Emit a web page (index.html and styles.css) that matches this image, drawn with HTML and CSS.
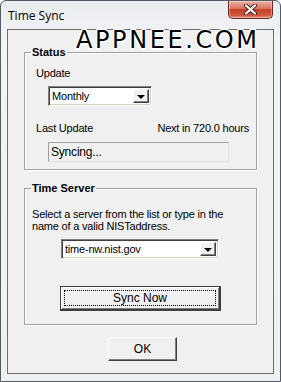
FILE: index.html
```html
<!DOCTYPE html>
<html lang="en">
<head>
    <meta charset="UTF-8">
    <title>Time Sync</title>
    <link rel="stylesheet" href="styles.css">
</head>
<body>
    <div class="window">
        <div class="titlebar">
            <span class="title">Time Sync</span>
            <button class="close" title="Close">
                <svg width="15" height="11" viewBox="0 0 15 11">
                    <path d="M3 1.5 L12 9.5 M12 1.5 L3 9.5" stroke="#4a2a26" stroke-width="4.2" stroke-linecap="round"/>
                    <path d="M3 1.5 L12 9.5 M12 1.5 L3 9.5" stroke="#fff" stroke-width="2.2" stroke-linecap="round"/>
                </svg>
            </button>
        </div>
        <div class="client">
            <fieldset class="group status">
                <legend>Status</legend>
                <div class="label indent">Update</div>
                <div class="combo combo-update">
                    <span class="combo-text">Monthly</span>
                    <span class="combo-btn"><span class="arrow"></span></span>
                </div>
                <div class="row indent">
                    <span>Last Update</span>
                    <span>Next in 720.0 hours</span>
                </div>
                <div class="readonly">Syncing...</div>
            </fieldset>
            <fieldset class="group server">
                <legend>Time Server</legend>
                <p class="hint">Select a server from the list or type in the name of a valid NISTaddress.</p>
                <div class="combo combo-server">
                    <span class="combo-text">time-nw.nist.gov</span>
                    <span class="combo-btn"><span class="arrow"></span></span>
                </div>
                <button class="btn btn-default"><span class="focus">Sync Now</span></button>
            </fieldset>
            <button class="btn btn-ok">OK</button>
        </div>
        <div class="watermark">APPNEE.COM</div>
    </div>
</body>
</html>
```

FILE: styles.css
```css
body {
    margin: 0;
    background-color: #fff;
    font-family: 'Liberation Sans', Arial, sans-serif;
    font-size: 11px;
    letter-spacing: -0.2px;
    color: #000;
}
.window {
    position: relative;
    width: 281px;
    height: 382px;
    box-sizing: border-box;
    border: 1px solid #555b63;
    border-radius: 6px 6px 0 0;
    background: linear-gradient(#e9ecf0, #f3f4f6 40px, #eef0f2);
    padding: 0 6px 7px 6px;
    overflow: hidden;
}
.titlebar {
    height: 28px;
    display: flex;
    align-items: flex-start;
}
.title {
    font-family: 'Open Sans', 'Noto Sans', sans-serif;
    font-size: 12px;
    line-height: 14px;
    letter-spacing: 0;
    margin: 8px 0 0 1px;
    color: #000;
}
.close {
    margin-left: auto;
    margin-right: 1px;
    width: 45px;
    height: 18px;
    padding: 0;
    display: flex;
    align-items: center;
    justify-content: center;
    border: 1px solid #6c2b22;
    border-top: none;
    border-radius: 0 0 5px 5px;
    background: linear-gradient(#eab3a6, #d9735d 45%, #c5402a 50%, #cf5a3f 85%, #e39a7f);
    box-shadow: inset 0 0 0 1px rgba(255, 255, 255, 0.35);
}
.client {
    height: 345px;
    box-sizing: border-box;
    border: 1px solid #6e6e6e;
    background-color: #f0f0f0;
    padding: 0;
    overflow: hidden;
}
.group {
    width: 233px;
    box-sizing: border-box;
    margin: 0 0 0 16px;
    border: 1px solid #a0a0a0;
    box-shadow: inset 1px 1px 0 #fff, 1px 1px 0 #fff;
    padding: 0 7px 7px 7px;
    min-width: 0;
}
.group legend {
    font-weight: bold;
    line-height: 13px;
    letter-spacing: 0;
    padding: 0 1px;
    margin-left: -1px;
}
.status {
    margin-top: 16px;
}
.server {
    margin-top: 12px;
    padding-bottom: 13px;
}
.label {
    line-height: 13px;
    margin-top: 8px;
}
.indent {
    margin-left: 4px;
}
.combo {
    display: flex;
    height: 20px;
    box-sizing: border-box;
    background-color: #fff;
    border: 1px solid;
    border-color: #808080 #fff #fff #808080;
    box-shadow: inset 1px 1px 0 #404040, inset -1px -1px 0 #d4d0c8;
    padding: 2px 2px 2px 2px;
}
.combo-text {
    flex: 1;
    line-height: 14px;
    padding-left: 1px;
}
.combo-btn {
    width: 16px;
    height: 14px;
    box-sizing: border-box;
    background-color: #f0f0f0;
    border: 1px solid;
    border-color: #fff #404040 #404040 #fff;
    box-shadow: inset -1px -1px 0 #808080;
    display: flex;
    align-items: center;
    justify-content: center;
}
.arrow {
    width: 0;
    height: 0;
    border-left: 4px solid transparent;
    border-right: 4px solid transparent;
    border-top: 4px solid #000;
    margin-top: 1px;
}
.combo-update {
    width: 104px;
    margin: 6px 0 0 16px;
}
.row {
    display: flex;
    justify-content: space-between;
    line-height: 13px;
    margin-top: 16px;
}
.readonly {
    width: 181px;
    height: 20px;
    box-sizing: border-box;
    margin: 7px 0 0 16px;
    border: 1px solid;
    border-color: #a0a0a0 #e3e3e3 #e3e3e3 #a0a0a0;
    line-height: 18px;
    padding-left: 2px;
    font-size: 12px;
}
.hint {
    margin: 13px 0 0 0;
    line-height: 12px;
}
.combo-server {
    width: 158px;
    margin: 7px 0 0 29px;
}
.btn {
    display: block;
    font-family: 'Liberation Sans', Arial, sans-serif;
    font-size: 12px;
    color: #000;
    background-color: #f0f0f0;
    box-sizing: border-box;
    padding: 0;
}
.btn-default {
    width: 161px;
    height: 25px;
    margin: 27px 0 0 28px;
    border: 1px solid #3c3c3c;
    border-bottom-width: 2px;
    border-right-width: 2px;
    box-shadow: inset 1px 1px 0 #fff, inset -1px -1px 0 #808080;
    padding: 3px;
}
.focus {
    display: block;
    height: 100%;
    box-sizing: border-box;
    border: 1px dotted #000;
    line-height: 15px;
}
.btn-ok {
    width: 69px;
    height: 24px;
    margin: 12px 0 0 100px;
    border: 1px solid;
    border-color: #fff #404040 #404040 #fff;
    box-shadow: inset -1px -1px 0 #808080;
}
.watermark {
    position: absolute;
    left: 75px;
    top: 26px;
    font-family: 'DejaVu Sans', sans-serif;
    font-size: 24px;
    line-height: 26px;
    letter-spacing: 2.6px;
    color: #000;
    text-shadow: -1px -1px 0 #fff, 1px -1px 0 #fff, -1px 1px 0 #fff, 1px 1px 0 #fff, 0 2px 0 #fff;
    pointer-events: none;
}
```
